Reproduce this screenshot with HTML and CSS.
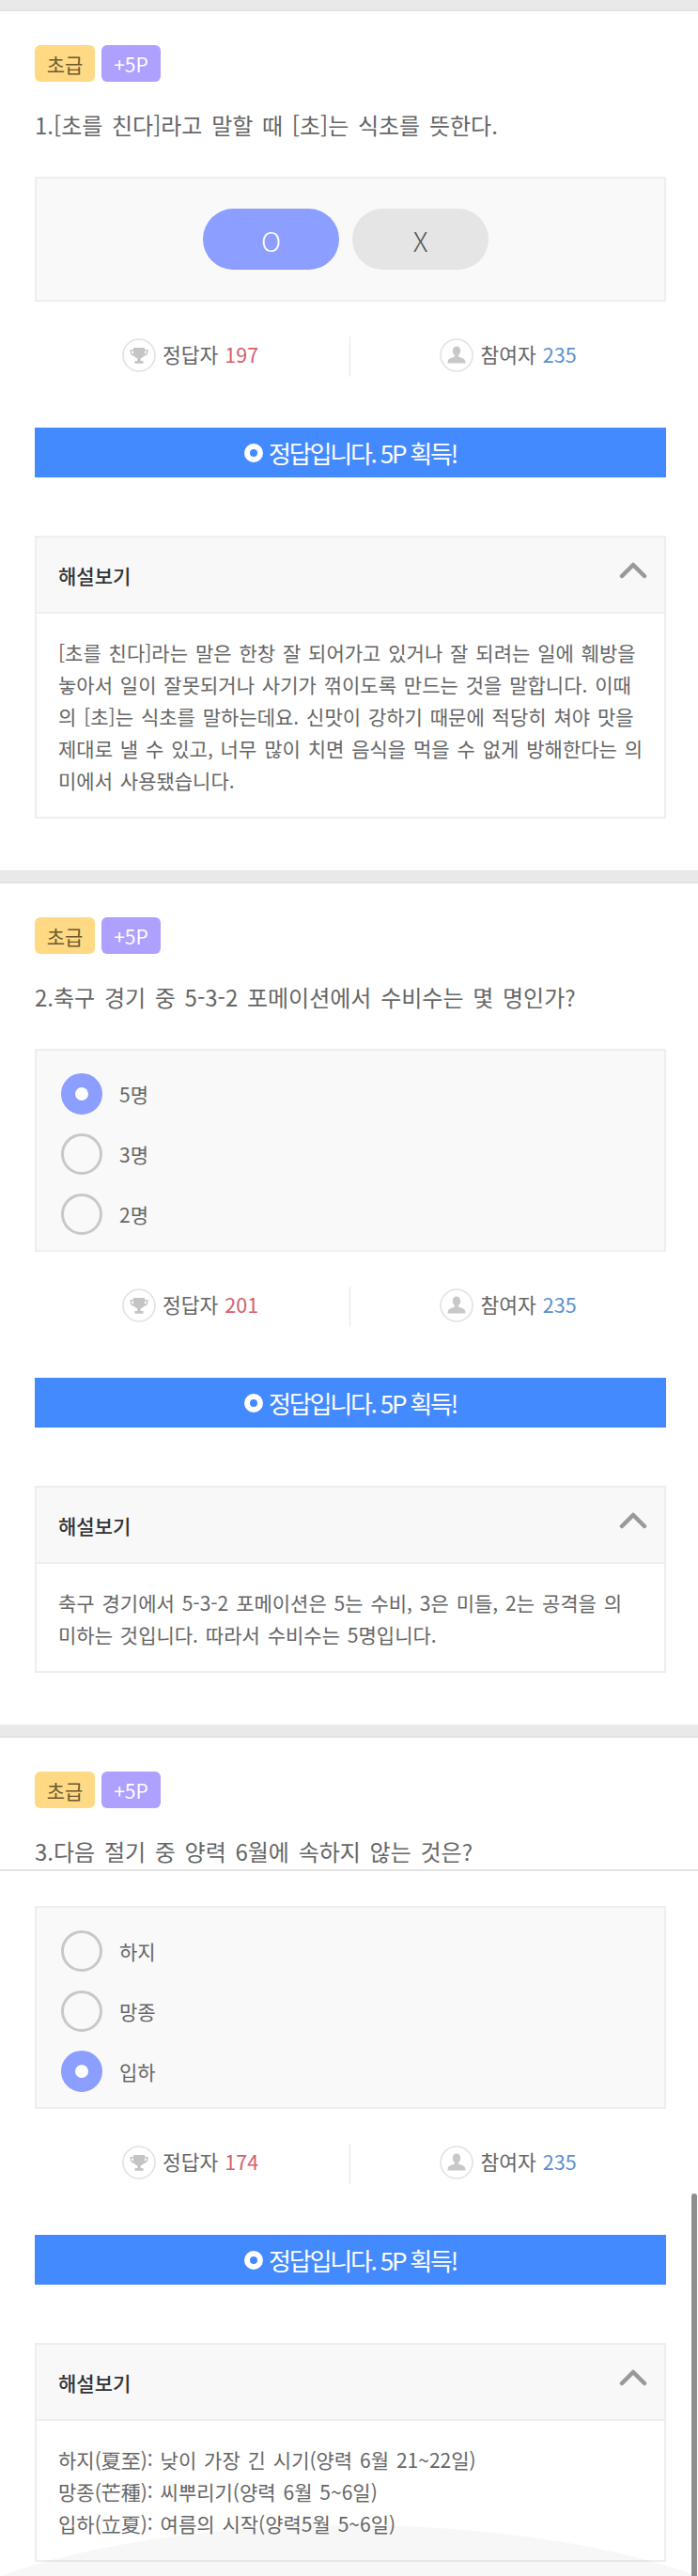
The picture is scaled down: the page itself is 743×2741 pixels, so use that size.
FILE: index.html
```html
<!DOCTYPE html>
<html lang="ko">
<head>
  <meta charset="UTF-8" />
  <meta name="viewport" content="width=device-width, initial-scale=1.0"/>
  <title>퀴즈</title>
  <link rel="stylesheet" href="styles.css">
</head>
<body>

  <div class="band"></div>

  <section class="quiz">
    <div class="badges">
      <span class="badge badge-level">초급</span>
      <span class="badge badge-point">+5P</span>
    </div>
    <h2 class="question">1.[초를 친다]라고 말할 때 [초]는 식초를 뜻한다.</h2>
    <div class="answer-box answer-ox">
      <button class="ox-btn ox-on">O</button>
      <button class="ox-btn">X</button>
    </div>
    <div class="stats">
      <div class="stat">
        <svg class="stat-icon" viewBox="0 0 36 36"><use href="#trophy"/></svg>
        정답자 <span class="num-right">197</span>
      </div>
      <div class="stat">
        <svg class="stat-icon" viewBox="0 0 36 36"><use href="#person"/></svg>
        참여자 <span class="num-all">235</span>
      </div>
    </div>
    <div class="result"><span class="result-mark"></span>정답입니다. 5P 획득!</div>
    <div class="explain">
      <div class="explain-head">
        해설보기
        <svg class="chevron" viewBox="0 0 30 18"><path d="M3 15 L15 3 L27 15"/></svg>
      </div>
      <div class="explain-body">[초를 친다]라는 말은 한창 잘 되어가고 있거나 잘 되려는 일에 훼방을 놓아서 일이 잘못되거나 사기가 꺾이도록 만드는 것을 말합니다. 이때의 [초]는 식초를 말하는데요. 신맛이 강하기 때문에 적당히 쳐야 맛을 제대로 낼 수 있고, 너무 많이 치면 음식을 먹을 수 없게 방해한다는 의미에서 사용됐습니다.</div>
    </div>
  </section>

  <div class="band"></div>

  <section class="quiz">
    <div class="badges">
      <span class="badge badge-level">초급</span>
      <span class="badge badge-point">+5P</span>
    </div>
    <h2 class="question">2.축구 경기 중 5-3-2 포메이션에서 수비수는 몇 명인가?</h2>
    <div class="answer-box answer-list">
      <div class="option"><span class="radio radio-on"></span>5명</div>
      <div class="option"><span class="radio"></span>3명</div>
      <div class="option"><span class="radio"></span>2명</div>
    </div>
    <div class="stats">
      <div class="stat">
        <svg class="stat-icon" viewBox="0 0 36 36"><use href="#trophy"/></svg>
        정답자 <span class="num-right">201</span>
      </div>
      <div class="stat">
        <svg class="stat-icon" viewBox="0 0 36 36"><use href="#person"/></svg>
        참여자 <span class="num-all">235</span>
      </div>
    </div>
    <div class="result"><span class="result-mark"></span>정답입니다. 5P 획득!</div>
    <div class="explain">
      <div class="explain-head">
        해설보기
        <svg class="chevron" viewBox="0 0 30 18"><path d="M3 15 L15 3 L27 15"/></svg>
      </div>
      <div class="explain-body">축구 경기에서 5-3-2 포메이션은 5는 수비, 3은 미들, 2는 공격을 의<br>미하는 것입니다. 따라서 수비수는 5명입니다.</div>
    </div>
  </section>

  <div class="band"></div>

  <section class="quiz">
    <div class="badges">
      <span class="badge badge-level">초급</span>
      <span class="badge badge-point">+5P</span>
    </div>
    <h2 class="question question-rule">3.다음 절기 중 양력 6월에 속하지 않는 것은?</h2>
    <div class="answer-box answer-list">
      <div class="option"><span class="radio"></span>하지</div>
      <div class="option"><span class="radio"></span>망종</div>
      <div class="option"><span class="radio radio-on"></span>입하</div>
    </div>
    <div class="stats">
      <div class="stat">
        <svg class="stat-icon" viewBox="0 0 36 36"><use href="#trophy"/></svg>
        정답자 <span class="num-right">174</span>
      </div>
      <div class="stat">
        <svg class="stat-icon" viewBox="0 0 36 36"><use href="#person"/></svg>
        참여자 <span class="num-all">235</span>
      </div>
    </div>
    <div class="result"><span class="result-mark"></span>정답입니다. 5P 획득!</div>
    <div class="explain">
      <div class="explain-head">
        해설보기
        <svg class="chevron" viewBox="0 0 30 18"><path d="M3 15 L15 3 L27 15"/></svg>
      </div>
      <div class="explain-body">하지(夏至): 낮이 가장 긴 시기(양력 6월 21~22일)<br>망종(芒種): 씨뿌리기(양력 6월 5~6일)<br>입하(立夏): 여름의 시작(양력5월 5~6일)</div>
    </div>
  </section>

  <!-- overlays at the bottom of the phone screen -->
  <svg class="bottom-arc" viewBox="0 0 743 54" preserveAspectRatio="none"><path d="M0 54 C200 -18 543 -18 743 54 Z"/></svg>
  <div class="scrollbar"></div>

  <!-- shared icons -->
  <svg class="icon-defs" width="0" height="0">
    <symbol id="trophy" viewBox="0 0 36 36">
      <circle cx="18" cy="18" r="17" fill="#fff" stroke="#e2e2e2" stroke-width="1.6"/>
      <path fill="#c4c4c4" d="M12 10h12v2h3.500v2.200c0 2.600-1.800 4.400-4.600 4.700-.8 1.300-1.900 2.100-3.200 2.400V24h2.800v2.700h-9V24h2.800v-2.700c-1.300-.3-2.400-1.100-3.200-2.400-2.800-.3-4.600-2.100-4.600-4.700V12H12zm0 3.600h-2v.7c0 1.100.7 2 2 2.400zm12 0v3.100c1.300-.4 2-1.300 2-2.400v-.7z"/>
    </symbol>
    <symbol id="person" viewBox="0 0 36 36">
      <circle cx="18" cy="18" r="17" fill="#fff" stroke="#e2e2e2" stroke-width="1.6"/>
      <path fill="#c8c8c8" d="M18 8.500c2.500 0 4.200 2 4.200 4.700 0 2-.9 3.700-2 4.600v2c2.800.8 6.300 1.900 6.800 3.500l.6 3.200H8.400l.6-3.200c.5-1.600 4-2.700 6.800-3.500v-2c-1.100-.9-2-2.600-2-4.600 0-2.700 1.700-4.700 4.200-4.700z"/>
    </symbol>
  </svg>

</body>
</html>
```

FILE: styles.css
```css
* {
  margin: 0;
  padding: 0;
  box-sizing: border-box;
  font-family: "Noto Sans CJK KR", "Noto Sans", sans-serif;
}

body {
  position: relative;
  width: 743px;
  height: 2741px;
  overflow: hidden;
  background-color: #ffffff;
  color: #666666;
}

.band {
  height: 14px;
  background-color: #e9e9e9;
  border-bottom: 2px solid #e0e0e0;
}

.band:first-child {
  height: 12px;
}

.quiz {
  padding: 36px 34px 55px 37px;
}

.badges {
  display: flex;
  gap: 7px;
  margin-bottom: 29px;
}

.badge {
  display: flex;
  justify-content: center;
  align-items: center;
  height: 39px;
  border-radius: 6px;
  font-size: 21px;
  font-weight: 400;
}

.badge-level {
  width: 64px;
  background-color: #ffd983;
  color: #6b5a30;
}

.badge-point {
  width: 63px;
  background-color: #ada0ff;
  color: #ffffff;
}

.question {
  height: 34px;
  margin-bottom: 38px;
  font-size: 24px;
  font-weight: 400;
  line-height: 34px;
  word-spacing: 3px;
  color: #666666;
}

/* thin line below the third question, across the whole width */
.question-rule {
  position: relative;
  margin-bottom: 41px;
}

.question-rule::after {
  content: "";
  position: absolute;
  left: -37px;
  right: -34px;
  top: 36px;
  height: 2px;
  background-color: #e2e2e2;
}

.answer-box {
  background-color: #f9f9f9;
  border: 2px solid #eeeeee;
}

.answer-ox {
  display: flex;
  justify-content: center;
  gap: 14px;
  height: 133px;
  padding: 32px 10px 0 0;
}

.ox-btn {
  width: 145px;
  height: 65px;
  border: none;
  border-radius: 33px;
  background-color: #e5e5e5;
  color: #555555;
  font-size: 29px;
  font-weight: 300;
}

.ox-on {
  background-color: #8c9eff;
  color: #ffffff;
}

.answer-list {
  height: 216px;
  padding: 24px 26px 0;
}

.option {
  display: flex;
  align-items: center;
  gap: 18px;
  height: 43px;
  margin-bottom: 21px;
  font-size: 21px;
  font-weight: 400;
}

.radio {
  width: 44px;
  height: 44px;
  border-radius: 50%;
  border: 3px solid #c8c8c8;
}

.radio-on {
  border: 15px solid #8c9eff;
  background-color: #ffffff;
}

.stats {
  display: flex;
  height: 43px;
  margin: 37px 0 54px;
}

.stat {
  flex: 1;
  display: flex;
  justify-content: center;
  align-items: center;
  gap: 7px;
  padding-bottom: 7px;
  font-size: 21.5px;
  font-weight: 400;
}

.stat:first-child {
  flex: 0 0 335px;
  padding-right: 4px;
}

.stat + .stat {
  border-left: 1px solid #e6e6e6;
}

.stat-icon {
  width: 36px;
  height: 36px;
  margin-top: 4px;
}

.num-right {
  color: #d4606c;
}

.num-all {
  color: #5c8fd0;
}

.result {
  display: flex;
  justify-content: center;
  align-items: center;
  gap: 6px;
  height: 53px;
  margin-bottom: 62px;
  background-color: #448aff;
  color: #ffffff;
  font-size: 26px;
  font-weight: 400;
  letter-spacing: -2.2px;
}

.result-mark {
  width: 20px;
  height: 20px;
  border-radius: 50%;
  border: 6px solid #ffffff;
}

.explain {
  border: 2px solid #eeeeee;
}

.explain-head {
  display: flex;
  justify-content: space-between;
  align-items: center;
  height: 81px;
  padding: 0 18px 0 23px;
  background-color: #f8f8f8;
  border-bottom: 2px solid #eeeeee;
  font-size: 21px;
  font-weight: 500;
  color: #333333;
}

.chevron {
  width: 30px;
  height: 18px;
  margin-bottom: 10px;
  fill: none;
  stroke: #999999;
  stroke-width: 4.500;
  stroke-linecap: round;
  stroke-linejoin: round;
}

.explain-body {
  padding: 24px 22px 22px 23px;
  font-size: 21px;
  font-weight: 400;
  line-height: 34px;
  word-spacing: 2px;
  color: #666666;
}

.bottom-arc {
  position: absolute;
  left: 0;
  bottom: 0;
  width: 743px;
  height: 54px;
  fill: rgba(120, 120, 120, 0.06);
}

.scrollbar {
  position: absolute;
  top: 2334px;
  bottom: 0;
  left: 736px;
  width: 6px;
  border-radius: 3px 3px 0 0;
  background-color: #8e8e8e;
}

.icon-defs {
  position: absolute;
}
```
